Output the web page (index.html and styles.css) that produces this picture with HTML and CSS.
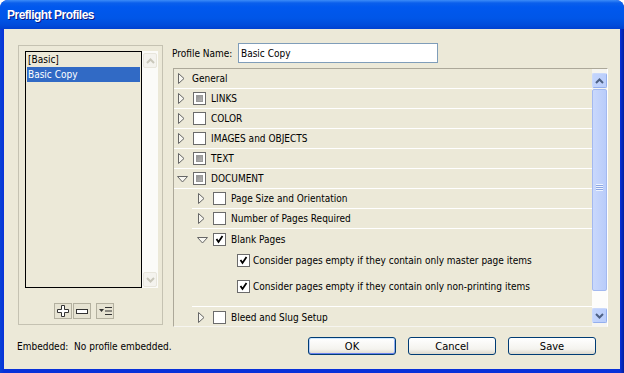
FILE: index.html
```html
<!DOCTYPE html>
<html lang="en">
<head>
    <meta charset="UTF-8">
    <title>Preflight Profiles</title>
    <link rel="stylesheet" href="styles.css">
</head>
<body>
    <div class="window">
        <div class="titlebar">Preflight Profiles</div>

        <div class="client">
            <div class="main">

                <!-- profile list -->
                <div class="groupbox">
                    <div class="listbox">
                        <div class="list">
                            <div class="item">[Basic]</div>
                            <div class="item selected">Basic Copy</div>
                        </div>
                        <div class="vscroll disabled">
                            <div class="sbtn"><svg width="9" height="6" viewBox="0 0 9 6"><path d="M1 5 L4.5 1.5 L8 5" fill="none" stroke="#C9C7BA" stroke-width="2"/></svg></div>
                            <div class="strack"></div>
                            <div class="sbtn"><svg width="9" height="6" viewBox="0 0 9 6"><path d="M1 1 L4.5 4.5 L8 1" fill="none" stroke="#C9C7BA" stroke-width="2"/></svg></div>
                        </div>
                    </div>
                    <div class="listtools">
                        <div class="tool"><svg width="12" height="12" viewBox="0 0 12 12"><path d="M4.5 .5 H7.5 V4.5 H11.5 V7.5 H7.5 V11.5 H4.5 V7.5 H.5 V4.5 H4.5 Z" fill="#fff" stroke="#333"/></svg></div>
                        <div class="tool"><svg width="12" height="5" viewBox="0 0 12 5"><rect x=".5" y=".5" width="11" height="4" fill="#fff" stroke="#333"/></svg></div>
                        <div class="tool wide"><svg width="13" height="10" viewBox="0 0 13 10"><path d="M0 3 H5 L2.5 6 Z" fill="#333"/><path d="M6 1.5 H13 M6 5 H13 M6 8.5 H13" stroke="#333"/></svg></div>
                    </div>
                </div>

                <!-- profile settings -->
                <div class="settings">
                    <div class="namerow">
                        <label for="pname">Profile Name:</label>
                        <input id="pname" class="textbox" type="text" value="Basic Copy">
                    </div>

                    <div class="treepanel">
                        <div class="tree">
                            <div class="row">
                                <span class="tw right"></span>
                                <span class="lbl plain">General</span>
                            </div>
                            <div class="row">
                                <span class="tw right"></span>
                                <span class="cb mixed"></span>
                                <span class="lbl">LINKS</span>
                            </div>
                            <div class="row">
                                <span class="tw right"></span>
                                <span class="cb"></span>
                                <span class="lbl">COLOR</span>
                            </div>
                            <div class="row">
                                <span class="tw right"></span>
                                <span class="cb"></span>
                                <span class="lbl">IMAGES and OBJECTS</span>
                            </div>
                            <div class="row">
                                <span class="tw right"></span>
                                <span class="cb mixed"></span>
                                <span class="lbl">TEXT</span>
                            </div>
                            <div class="row">
                                <span class="tw down"></span>
                                <span class="cb mixed"></span>
                                <span class="lbl">DOCUMENT</span>
                            </div>
                            <div class="row child">
                                <span class="tw right"></span>
                                <span class="cb"></span>
                                <span class="lbl">Page Size and Orientation</span>
                            </div>
                            <div class="row child">
                                <span class="tw right"></span>
                                <span class="cb"></span>
                                <span class="lbl">Number of Pages Required</span>
                            </div>
                            <div class="group child">
                                <div class="row bare">
                                    <span class="tw down"></span>
                                    <span class="cb checked"></span>
                                    <span class="lbl">Blank Pages</span>
                                </div>
                                <div class="opts">
                                    <div class="opt">
                                        <span class="cb checked"></span>
                                        <span class="lbl">Consider pages empty if they contain only master page items</span>
                                    </div>
                                    <div class="opt">
                                        <span class="cb checked"></span>
                                        <span class="lbl">Consider pages empty if they contain only non-printing items</span>
                                    </div>
                                </div>
                            </div>
                            <div class="row child bare">
                                <span class="tw right"></span>
                                <span class="cb"></span>
                                <span class="lbl">Bleed and Slug Setup</span>
                            </div>
                        </div>

                        <div class="vscroll active">
                            <div class="sbtn"><svg width="9" height="6" viewBox="0 0 9 6"><path d="M1 5 L4.5 1.5 L8 5" fill="none" stroke="#4D6185" stroke-width="2"/></svg></div>
                            <div class="thumb"><span class="grip"></span></div>
                            <div class="strack"></div>
                            <div class="sbtn"><svg width="9" height="6" viewBox="0 0 9 6"><path d="M1 1 L4.5 4.5 L8 1" fill="none" stroke="#4D6185" stroke-width="2"/></svg></div>
                        </div>
                    </div>
                </div>
            </div>

            <div class="footer">
                <span class="embedded">Embedded:&nbsp; No profile embedded.</span>
                <div class="buttons">
                    <button class="btn default">OK</button>
                    <button class="btn">Cancel</button>
                    <button class="btn">Save</button>
                </div>
            </div>
        </div>
    </div>
</body>
</html>
```

FILE: styles.css
```css
html, body {
    margin: 0;
    padding: 0;
    background: #fff;
}
body {
    font-family: "DejaVu Sans Condensed", "DejaVu Sans", sans-serif;
    font-stretch: condensed;
    font-size: 10px;
    color: #000;
}
.window {
    width: 624px;
    height: 373px;
    display: flex;
    flex-direction: column;
    background: linear-gradient(to right, #0842D6 0, #0831D9 4px, #0831D9 620px, #001EA0 624px);
    border-radius: 8px 8px 0 0;
    overflow: hidden;
}
.titlebar {
    flex: none;
    height: 29px;
    padding-left: 7px;
    display: flex;
    align-items: center;
    background: linear-gradient(#3C8CF8 0, #0A5FEC 3px, #0058EE 7px, #0056E8 18px, #004CDB 25px, #0040D0 29px);
    color: #fff;
    font-family: "Liberation Sans", Arial, sans-serif;
    font-stretch: normal;
    font-weight: bold;
    font-size: 12px;
    letter-spacing: -0.5px;
    text-shadow: 1px 1px 0 #0A1883;
}
.client {
    flex: 1;
    margin: 0 4px 4px;
    background: #ECE9D8;
    display: flex;
    flex-direction: column;
}
.main {
    display: flex;
    padding-top: 14px;
}

/* left group with profile list */
.groupbox {
    margin: 2px 0 0 14px;
    border: 1px solid #C5C2B2;
    padding: 5px 0 0 6px;
    box-sizing: border-box;
    height: 280px;
    width: 145px;
}
.listbox {
    display: flex;
    height: 237px;
}
.list {
    width: 117px;
    border: 1px solid #000;
    box-sizing: border-box;
    background: #ECE9D8;
    padding: 0 1px;
}
.item {
    height: 15px;
    line-height: 15px;
    padding-left: 1px;
}
.item.selected {
    background: #316AC5;
    color: #fff;
}
.vscroll {
    display: flex;
    flex-direction: column;
    width: 15px;
    flex: none;
}
.vscroll.disabled {
    width: 16px;
    background: #FBFBF8;
    padding: 2px 0 1px;
    box-sizing: border-box;
}
.sbtn {
    height: 15px;
    flex: none;
    display: flex;
    align-items: center;
    justify-content: center;
    box-sizing: border-box;
    border-radius: 2px;
}
.disabled .sbtn {
    background: #F4F3EE;
    border: 1px solid #E8E6DC;
    margin: 0 1px;
}
.strack {
    flex: 1;
}
.listtools {
    display: flex;
    margin: 15px 0 0 29px;
}
.tool {
    width: 18px;
    height: 16px;
    box-sizing: border-box;
    border: 1px solid #B3B09F;
    background: #E6E3D2;
    display: flex;
    align-items: center;
    justify-content: center;
    margin-right: 1px;
}
.tool.wide {
    margin-left: 4px;
}

/* right side */
.settings {
    margin-left: 9px;
    display: flex;
    flex-direction: column;
}
.namerow {
    display: flex;
    align-items: center;
    height: 20px;
}
.namerow label {
    flex: 0 0 66px;
    white-space: nowrap;
}
.textbox {
    width: 200px;
    height: 20px;
    box-sizing: border-box;
    border: 1px solid #7F9DB9;
    background: #fff;
    font: inherit;
    padding: 0 2px;
    margin: 0;
    outline: none;
}
.treepanel {
    margin: 5px 0 0 1px;
    width: 435px;
    height: 259px;
    box-sizing: border-box;
    border: 1px solid #ACA899;
    border-right-color: #fff;
    border-bottom-color: #F6F5F0;
    display: flex;
}
.tree {
    flex: 1;
    overflow: hidden;
}
.row {
    height: 19px;
    border-bottom: 1px solid #fff;
    display: flex;
    align-items: center;
    padding-left: 3px;
}
.row.bare {
    border-bottom: none;
    height: 20px;
}
.child {
    margin-left: 18px;
}
.row.child, .child .row {
    padding-left: 5px;
}
.group {
    border-bottom: 1px solid #fff;
    height: 77px;
}
.opts {
    margin-top: -2px;
    padding-left: 45px;
}
.opt {
    height: 26px;
    display: flex;
    align-items: center;
}
.opt .cb {
    margin-right: 3px;
}
.tw {
    width: 16px;
    height: 11px;
    flex: none;
    background-repeat: no-repeat;
}
.tw.right {
    background-image: url("data:image/svg+xml,%3Csvg xmlns='http://www.w3.org/2000/svg' width='7' height='11'%3E%3Cpath d='M.5 .5 L6 5.5 L.5 10.5 Z' fill='%23F7F6F0' stroke='%23666'/%3E%3C/svg%3E");
    background-position: 1px 0;
}
.tw.down {
    background-image: url("data:image/svg+xml,%3Csvg xmlns='http://www.w3.org/2000/svg' width='11' height='7'%3E%3Cpath d='M.5 .5 H10.5 L5.5 6 Z' fill='%23F7F6F0' stroke='%23666'/%3E%3C/svg%3E");
    background-position: 0 3px;
}
.cb {
    width: 13px;
    height: 13px;
    flex: none;
    box-sizing: border-box;
    border: 1px solid #6B6B6B;
    background: #fff;
    margin-right: 5px;
    position: relative;
}
.cb.mixed::after {
    content: "";
    position: absolute;
    left: 2px;
    top: 2px;
    width: 7px;
    height: 7px;
    background: linear-gradient(135deg, #8E8E8E, #B8B8B8);
    box-shadow: inset 0 0 0 1px #9A9A9A;
}
.cb.checked {
    background: #fff url("data:image/svg+xml,%3Csvg xmlns='http://www.w3.org/2000/svg' width='11' height='11'%3E%3Cpath d='M2.5 5 L4.5 8 L8.5 2' fill='none' stroke='%23000' stroke-width='1.8'/%3E%3C/svg%3E") no-repeat 0 0;
}
.lbl.plain {
    margin-left: -1px;
}

/* active scrollbar */
.vscroll.active {
    padding: 4px 0 3px;
    background: #F6F5F0;
}
.active .sbtn {
    background: linear-gradient(to right, #C3D5FD, #BBCEFB);
    border: 1px solid #A5BDF5;
    border-color: #CAD9FB #94AFEE #94AFEE #CAD9FB;
}
.thumb {
    height: 202px;
    flex: none;
    box-sizing: border-box;
    border: 1px solid #A3B9F0;
    border-radius: 2px;
    background: linear-gradient(to right, #C9D8FC, #B9CCFA);
    position: relative;
    margin-top: 1px;
}
.grip {
    position: absolute;
    left: 3px;
    top: 94px;
    width: 7px;
    height: 7px;
    background: repeating-linear-gradient(#EEF4FE 0, #EEF4FE 1px, #8CA6E3 1px, #8CA6E3 2px);
}
.vscroll.active .strack {
    background: #FDFDFB;
}

/* footer */
.footer {
    display: flex;
    align-items: center;
    margin-top: 10px;
    padding-left: 13px;
    padding-right: 24px;
}
.buttons {
    margin-left: auto;
    display: flex;
    gap: 12px;
}
.btn {
    width: 88px;
    height: 18px;
    box-sizing: border-box;
    border: 1px solid #003C74;
    border-radius: 3px;
    background: linear-gradient(#FFFFFF, #F4F3EE 70%, #DCD8CC);
    font: inherit;
    font-size: 11px;
    color: #000;
    padding: 0;
    line-height: 15px;
}
.btn.default {
    box-shadow: inset 0 1px 0 #CEE7FF, inset 0 -1px 0 #6982EE, inset 1px 0 0 #B6CEF8, inset -1px 0 0 #90AEF4;
}
```
